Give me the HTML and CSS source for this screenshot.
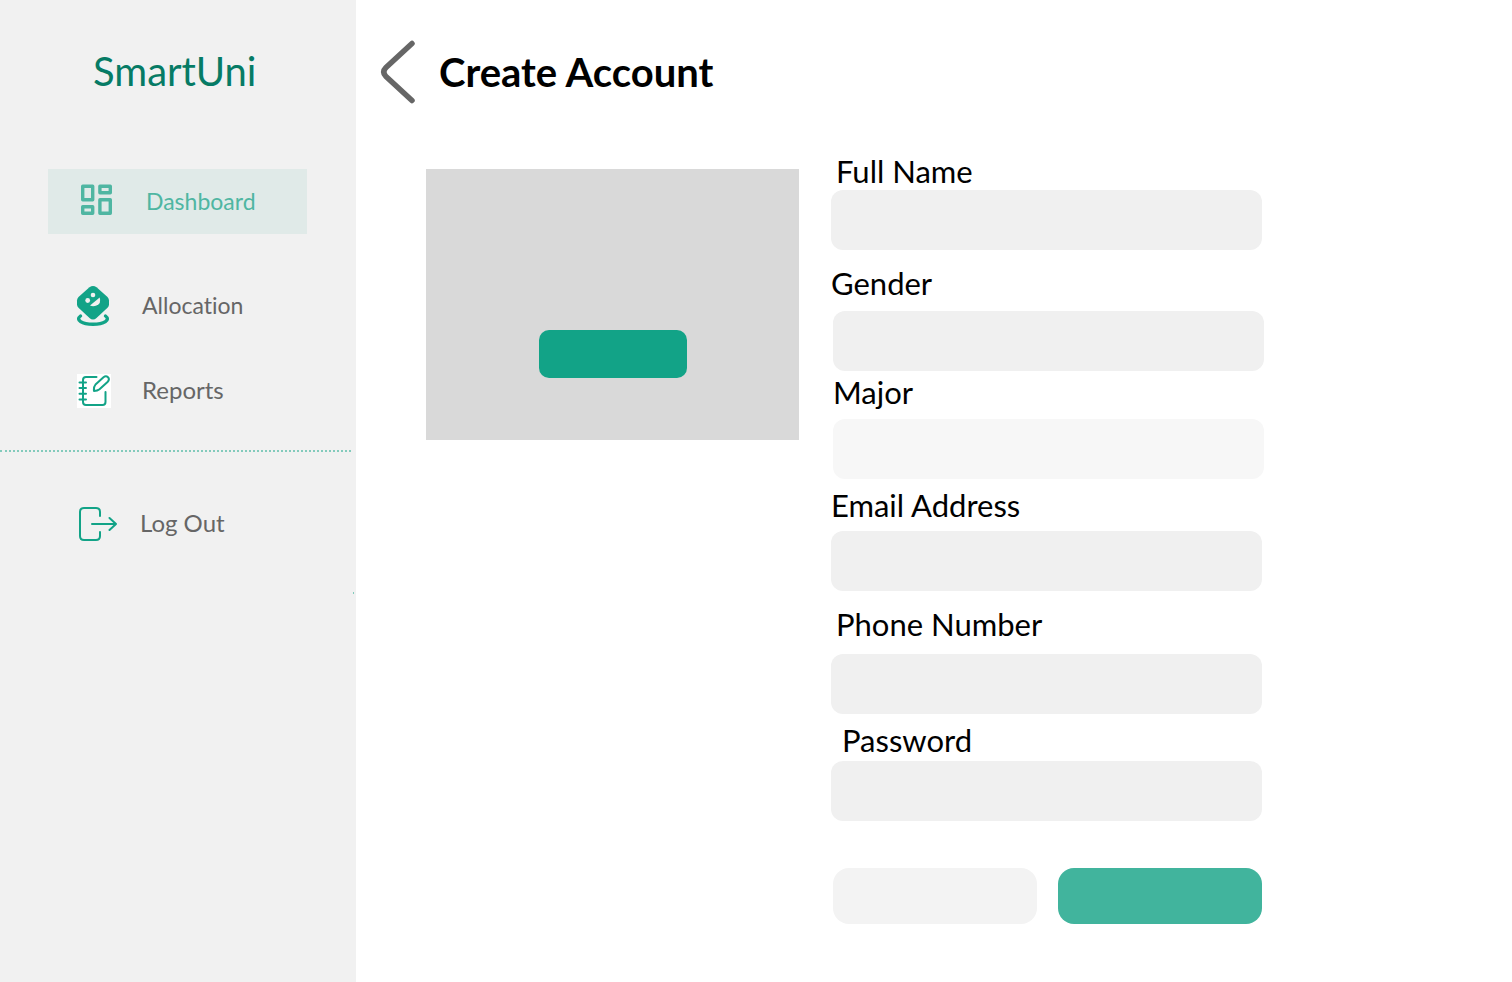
FILE: index.html
```html
<!DOCTYPE html>
<html lang="en">
<head>
<meta charset="utf-8">
<title>SmartUni – Create Account</title>
<meta name="viewport" content="width=device-width, initial-scale=1">
<link rel="stylesheet" href="styles.css">
</head>
<body>
<div class="app">
  <aside class="sidebar">
    <p class="brand">SmartUni</p>
    <nav class="nav" aria-label="Main">
      <a class="nav-link active" href="#dashboard">
        <svg class="icon" width="32" height="36" viewBox="0 0 32 36" fill="none" stroke="currentColor" stroke-width="3.4" stroke-linejoin="round"><path d="M1.700 2.200h10v13.600h-10zM18.900 2.200h10.400v6.500h-10.400zM1.700 22.700h10v6.600h-10zM18.900 15.800h10.400v13.500h-10.400z"/></svg>
        <span>Dashboard</span>
      </a>
      <a class="nav-link allocation" href="#allocation">
        <svg class="icon" width="34" height="42" viewBox="0 0 34 42"><path fill="#12a387" d="M13.500 2.200Q17 -.4 20.500 2.200L31.500 12Q33 13.500 33 15.500V19.500Q33 21.300 31.500 22.800L20.500 33Q17 36 13.500 33L2.500 22.800Q1 21.300 1 19.500V15.500Q1 13.500 2.500 12Z"/><circle cx="17" cy="10" r="2.300" fill="#f0f0f0"/><circle cx="11.700" cy="15.500" r="2.400" fill="#f0f0f0"/><path fill="#f0f0f0" d="M23.700 12.500Q25.500 18.500 20.500 20.500Q17 21.800 14 20.500Z"/><path fill="none" stroke="#12a387" stroke-width="3.400" stroke-linecap="round" d="M4.500 31C-1 35 6 39.200 17 39.200S35 35 29.500 31"/></svg>
        <span>Allocation</span>
      </a>
      <a class="nav-link reports" href="#reports">
        <svg class="icon" width="34" height="34" viewBox="0 0 34 34" fill="none" stroke="#12a387" stroke-width="2" stroke-linecap="round" stroke-linejoin="round"><path fill="#fff" stroke="none" d="M0 0h34v34H0z"/><path d="M19.500 3H9Q6 3 6 6v22q0 3 3 3h16.500q3 0 3-3V18M2.500 8.500H9M2.500 14H9M2.500 19.700H9M2.500 25.400H9"/><path d="M17 17Q16.500 13 18.500 10.500L26.500 3.200Q29 1.300 31 3.200Q33 5.300 30.500 8L22.500 15.300Q20.500 17 17 17Z"/></svg>
        <span>Reports</span>
      </a>
    </nav>
    <hr class="divider">
    <a class="nav-link logout" href="#logout">
      <svg class="icon" width="40" height="34" viewBox="0 0 40 34" fill="none" stroke="#12a387" stroke-width="2" stroke-linecap="round" stroke-linejoin="round"><path d="M23 9V5q0-4-4-4H7Q3 1 3 5v24q0 4 4 4h12q4 0 4-4v-4M15 17h24M32.500 11l6.500 6-6.500 6"/></svg>
      <span>Log Out</span>
    </a>
    <span class="speck"></span>
  </aside>
  <main class="main">
    <header class="header">
      <a class="back" href="#back" aria-label="Back"><svg width="36" height="66" viewBox="0 0 36 66" fill="none" stroke="#666" stroke-width="5.500" stroke-linecap="round"><path d="M32 4.500L6 28.500Q1.500 33 6 37.500L32 61.500"/></svg></a>
      <h1 class="title">Create Account</h1>
    </header>
    <form class="account">
      <div class="photo"><button class="upload" type="button" aria-label="Upload photo"></button></div>
      <div class="fields">
        <div class="field name"><label for="name">Full Name</label><input id="name" type="text"></div>
        <div class="field gender"><label for="gender">Gender</label><input id="gender" type="text"></div>
        <div class="field major"><label for="major">Major</label><input id="major" type="text"></div>
        <div class="field email"><label for="email">Email Address</label><input id="email" type="email"></div>
        <div class="field phone"><label for="phone">Phone Number</label><input id="phone" type="tel"></div>
        <div class="field password"><label for="password">Password</label><input id="password" type="password"></div>
        <div class="actions">
          <button class="action" type="reset" aria-label="Cancel"></button>
          <button class="action save" type="submit" aria-label="Save"></button>
        </div>
      </div>
    </form>
  </main>
</div>
</body>
</html>
```

FILE: styles.css
```css
* { box-sizing: border-box; }
body { margin: 0; background: #fff; color: #000; font-family: Lato, "Liberation Sans", sans-serif; }
.app { display: flex; min-height: 100vh; }

.sidebar { position: relative; flex: 0 0 356px; background: #f1f1f1; }
.brand { margin: 0; padding: 43px 0 0 93px; font-size: 40px; line-height: 56px; color: #067b65; }
.nav { padding-top: 70px; }
.nav-link { display: flex; align-items: center; height: 64px; padding-left: 76px; color: #666; font-size: 24px; font-variant-ligatures: none; text-decoration: none; }
.nav-link span { padding-bottom: 4px; }
.icon { flex: none; }
.active { height: 65px; margin: 0 49px 0 48px; padding-left: 33px; gap: 33px; background: #e0eae8; color: #4fb6a2; }
.allocation { margin-top: 40px; gap: 32px; }
.nav .active, .nav .allocation { font-size: 23px; }
.nav .active span, .nav .allocation span { padding-bottom: 2px; }
.reports { margin-top: 21px; padding-left: 77px; gap: 31px; }
.divider { margin: 27px 5px 0 0; border: 0; border-top: 2px dotted #83cbbc; }
.logout { margin-top: 40px; padding-left: 77px; gap: 23px; }
.speck { position: absolute; top: 592px; right: 2px; width: 1px; height: 2px; background: #83cbbc; }

.main { flex: 1; min-width: 0; }
.header { display: flex; align-items: center; gap: 23px; padding: 39px 24px 0; }
.back { display: flex; }
.title { margin: 0; font-size: 40px; line-height: 48px; font-weight: 700; }
.account { display: flex; align-items: flex-start; gap: 32px; padding: 48px 24px 48px 70px; }
.photo { display: flex; flex: 0 1 373px; justify-content: center; align-items: flex-end; height: 271px; margin-top: 16px; padding-bottom: 62px; background: #d9d9d9; }
.upload { width: 148px; height: 48px; border: 0; border-radius: 10px; background: #12a387; }
.fields { flex: 0 1 433px; }
.field { display: flex; flex-direction: column; padding-right: 2px; }
.field label { font-size: 31px; line-height: 36px; }
.field input { width: 100%; height: 60px; padding: 0 16px; border: 0; border-radius: 12px; background: #f0f0f0; font: inherit; font-size: 24px; }
.name label, .phone label { padding-left: 5px; }
.name { gap: 1px; }
.gender { margin-top: 15px; gap: 10px; }
.major { margin-top: 3px; gap: 9px; }
.gender, .major { padding: 0 0 0 2px; }
.gender label { margin-left: -2px; }
.major input { background: #f7f7f7; }
.email { margin-top: 8px; gap: 8px; }
.phone { margin-top: 15px; gap: 12px; }
.password { margin-top: 8px; gap: 3px; }
.password label { padding-left: 11px; }
.actions { display: flex; gap: 21px; margin-top: 47px; padding: 0 2px; }
.action { flex: 1; height: 56px; border: 0; border-radius: 16px; background: #f3f3f3; }
.save { background: #41b49d; }
```
